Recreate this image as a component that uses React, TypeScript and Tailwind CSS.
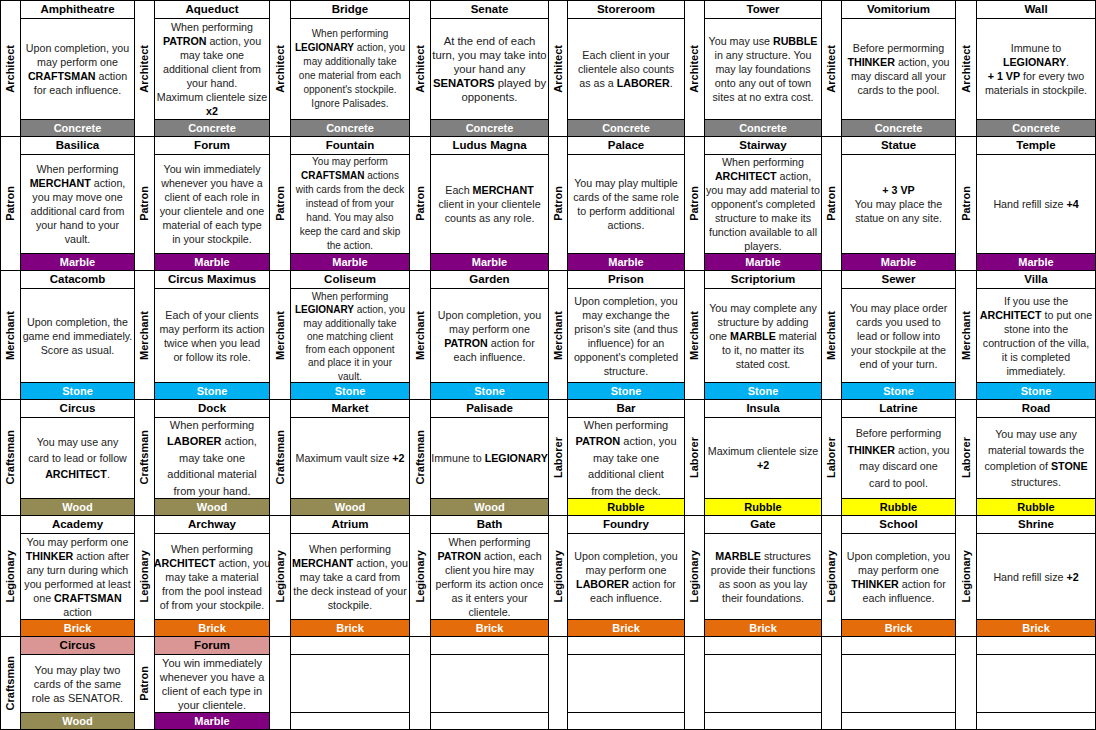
import React from "react";

type Mat = "Concrete" | "Marble" | "Stone" | "Wood" | "Rubble" | "Brick" | "";

const MAT_CLS: Record<string, string> = {
  Concrete: "bg-[#808080] text-white",
  Marble: "bg-[#800080] text-white",
  Stone: "bg-[#00b0f0] text-white",
  Wood: "bg-[#948a54] text-white",
  Rubble: "bg-[#ffff00] text-black",
  Brick: "bg-[#e46c0a] text-white",
  "": "bg-white",
};

type Card = {
  role: string;
  title: string;
  lines: string[];
  mat: Mat;
  body?: string;
  titleCls?: string;
};

const A = "Architect";
const P = "Patron";
const M = "Merchant";
const C = "Craftsman";
const L = "Laborer";
const G = "Legionary";

const rows: Card[][] = [
  [
    { role: A, title: "Amphitheatre", mat: "Concrete", lines: ["Upon completion, you", "may perform one", "**CRAFTSMAN** action", "for each influence."] },
    { role: A, title: "Aqueduct", mat: "Concrete", lines: ["When performing", "**PATRON** action, you", "may take one", "additional client from", "your hand.", "Maximum clientele size", "**x2**"] },
    { role: A, title: "Bridge", mat: "Concrete", body: "!text-[10px]", lines: ["When performing", "**LEGIONARY** action, you", "may additionally take", "one material from each", "opponent's stockpile.", "Ignore Palisades."] },
    { role: A, title: "Senate", mat: "Concrete", body: "!text-[11.3px]", lines: ["At the end of each", "turn, you may take into", "your hand any", "**SENATORS** played by", "opponents."] },
    { role: A, title: "Storeroom", mat: "Concrete", lines: ["Each client in your", "clientele also counts", "as as a **LABORER**."] },
    { role: A, title: "Tower", mat: "Concrete", lines: ["You may use **RUBBLE**", "in any structure. You", "may lay foundations", "onto any out of town", "sites at no extra cost."] },
    { role: A, title: "Vomitorium", mat: "Concrete", lines: ["Before permorming", "**THINKER** action, you", "may discard all your", "cards to the pool."] },
    { role: A, title: "Wall", mat: "Concrete", lines: ["Immune to", "**LEGIONARY**.", "**+ 1 VP** for every two", "materials in stockpile."] },
  ],
  [
    { role: P, title: "Basilica", mat: "Marble", lines: ["When performing", "**MERCHANT** action,", "you may move one", "additional card from", "your hand to your", "vault."] },
    { role: P, title: "Forum", mat: "Marble", lines: ["You win immediately", "whenever you have a", "client of each role in", "your clientele and one", "material of each type", "in your stockpile."] },
    { role: P, title: "Fountain", mat: "Marble", body: "!text-[10px]", lines: ["You may perform", "**CRAFTSMAN** actions", "with cards from the deck", "instead of from your", "hand. You may also", "keep the card and skip", "the action."] },
    { role: P, title: "Ludus Magna", mat: "Marble", lines: ["Each **MERCHANT**", "client in your clientele", "counts as any role."] },
    { role: P, title: "Palace", mat: "Marble", lines: ["You may play multiple", "cards of the same role", "to perform additional", "actions."] },
    { role: P, title: "Stairway", mat: "Marble", lines: ["When performing", "**ARCHITECT** action,", "you may add material to", "opponent's completed", "structure to make its", "function available to all", "players."] },
    { role: P, title: "Statue", mat: "Marble", lines: ["**+ 3 VP**", "You may place the", "statue on any site."] },
    { role: P, title: "Temple", mat: "Marble", lines: ["Hand refill size **+4**"] },
  ],
  [
    { role: M, title: "Catacomb", mat: "Stone", lines: ["Upon completion, the", "game end immediately.", "Score as usual."] },
    { role: M, title: "Circus Maximus", mat: "Stone", lines: ["Each of your clients", "may perform its action", "twice when you lead", "or follow its role."] },
    { role: M, title: "Coliseum", mat: "Stone", body: "!text-[10px] !leading-[13.3px] !justify-start pt-[1px]", lines: ["When performing", "**LEGIONARY** action, you", "may additionally take", "one matching client", "from each opponent", "and place it in your", "vault."] },
    { role: M, title: "Garden", mat: "Stone", lines: ["Upon completion, you", "may perform one", "**PATRON** action for", "each influence."] },
    { role: M, title: "Prison", mat: "Stone", lines: ["Upon completion, you", "may exchange the", "prison's site (and thus", "influence) for an", "opponent's completed", "structure."] },
    { role: M, title: "Scriptorium", mat: "Stone", lines: ["You may complete any", "structure by adding", "one **MARBLE** material", "to it, no matter its", "stated cost."] },
    { role: M, title: "Sewer", mat: "Stone", lines: ["You may place order", "cards you used to", "lead or follow into", "your stockpile at the", "end of your turn."] },
    { role: M, title: "Villa", mat: "Stone", lines: ["If you use the", "**ARCHITECT** to put one", "stone into the", "contruction of the villa,", "it is completed", "immediately."] },
  ],
  [
    { role: C, title: "Circus", mat: "Wood", body: "!leading-[16px]", lines: ["You may use any", "card to lead or follow", "**ARCHITECT**."] },
    { role: C, title: "Dock", mat: "Wood", body: "!leading-[16.5px] !text-[11px]", lines: ["When performing", "**LABORER** action,", "may take one", "additional material", "from your hand."] },
    { role: C, title: "Market", mat: "Wood", lines: ["Maximum vault size **+2**"] },
    { role: C, title: "Palisade", mat: "Wood", lines: ["Immune to **LEGIONARY**"] },
    { role: L, title: "Bar", mat: "Rubble", body: "!leading-[16.5px] !text-[11px]", lines: ["When performing", "**PATRON** action, you", "may take one", "additional client", "from the deck."] },
    { role: L, title: "Insula", mat: "Rubble", lines: ["Maximum clientele size", "**+2**"] },
    { role: L, title: "Latrine", mat: "Rubble", body: "!leading-[16.5px]", lines: ["Before performing", "**THINKER** action, you", "may discard one", "card to pool."] },
    { role: L, title: "Road", mat: "Rubble", body: "!leading-[16px]", lines: ["You may use any", "material towards the", "completion of **STONE**", "structures."] },
  ],
  [
    { role: G, title: "Academy", mat: "Brick", lines: ["You may perform one", "**THINKER** action after", "any turn during which", "you performed at least", "one **CRAFTSMAN**", "action"] },
    { role: G, title: "Archway", mat: "Brick", lines: ["When performing", "**ARCHITECT** action, you", "may take a material", "from the pool instead", "of from your stockpile."] },
    { role: G, title: "Atrium", mat: "Brick", lines: ["When performing", "**MERCHANT** action, you", "may take a card from", "the deck instead of your", "stockpile."] },
    { role: G, title: "Bath", mat: "Brick", lines: ["When performing", "**PATRON** action, each", "client you hire may", "perform its action once", "as it enters your", "clientele."] },
    { role: G, title: "Foundry", mat: "Brick", lines: ["Upon completion, you", "may perform one", "**LABORER** action for", "each influence."] },
    { role: G, title: "Gate", mat: "Brick", lines: ["**MARBLE** structures", "provide their functions", "as soon as you lay", "their foundations."] },
    { role: G, title: "School", mat: "Brick", lines: ["Upon completion, you", "may perform one", "**THINKER** action for", "each influence."] },
    { role: G, title: "Shrine", mat: "Brick", lines: ["Hand refill size **+2**"] },
  ],
  [
    { role: C, title: "Circus", mat: "Wood", titleCls: "bg-[#da9694]", body: "!text-[11px]", lines: ["You may play two", "cards of the same", "role as SENATOR."] },
    { role: P, title: "Forum", mat: "Marble", titleCls: "bg-[#da9694]", body: "!text-[11px]", lines: ["You win immediately", "whenever you have a", "client of each type in", "your clientele."] },
    { role: "", title: "", mat: "", lines: [] },
    { role: "", title: "", mat: "", lines: [] },
    { role: "", title: "", mat: "", lines: [] },
    { role: "", title: "", mat: "", lines: [] },
    { role: "", title: "", mat: "", lines: [] },
    { role: "", title: "", mat: "", lines: [] },
  ],
];

function Rich({ s }: { s: string }) {
  const parts = s.split("**");
  return (
    <>
      {parts.map((p, i) =>
        i % 2 === 1 ? (
          <b key={i} className="font-bold text-black">
            {p}
          </b>
        ) : (
          <span key={i}>{p}</span>
        )
      )}
    </>
  );
}

function Label({ text }: { text: string }) {
  return (
    <div className="border-r border-b border-black bg-white flex items-center justify-center overflow-hidden">
      <span className="[writing-mode:vertical-rl] rotate-180 font-bold text-[11px] text-black whitespace-nowrap">
        {text}
      </span>
    </div>
  );
}

function CardCell({ c }: { c: Card }) {
  return (
    <div className="border-r border-b border-black bg-white flex flex-col min-h-0 overflow-hidden">
      <div
        className={`h-[18px] shrink-0 border-b border-black flex items-center justify-center font-bold text-[11.5px] text-black whitespace-nowrap ${c.titleCls ?? ""}`}
      >
        {c.title}
      </div>
      <div
        className={`flex-1 min-h-0 overflow-hidden flex flex-col justify-center items-center text-center text-[10.7px] leading-[14px] text-[#222] whitespace-nowrap ${c.body ?? ""}`}
      >
        {c.lines.map((l, i) => (
          <div key={i}>
            <Rich s={l} />
          </div>
        ))}
      </div>
      <div
        className={`h-[17px] shrink-0 border-t border-black flex items-center justify-center font-bold text-[11px] ${MAT_CLS[c.mat]}`}
      >
        {c.mat}
      </div>
    </div>
  );
}

export default function App() {
  return (
    <div
      className="w-[1096px] h-[730px] bg-white overflow-hidden"
      style={{ fontFamily: '"Liberation Sans", Arial, sans-serif' }}
    >
      <div className="grid grid-cols-[20px_114px_20px_115px_21px_119px_21px_118px_19px_117px_20px_117px_20px_114px_21px_119px] grid-rows-[136px_134px_129px_116px_121px_93px] border-t border-l border-black">
        {rows.map((row, ri) =>
          row.map((c, ci) => (
            <React.Fragment key={`${ri}-${ci}`}>
              <Label text={c.role} />
              <CardCell c={c} />
            </React.Fragment>
          ))
        )}
      </div>
    </div>
  );
}
